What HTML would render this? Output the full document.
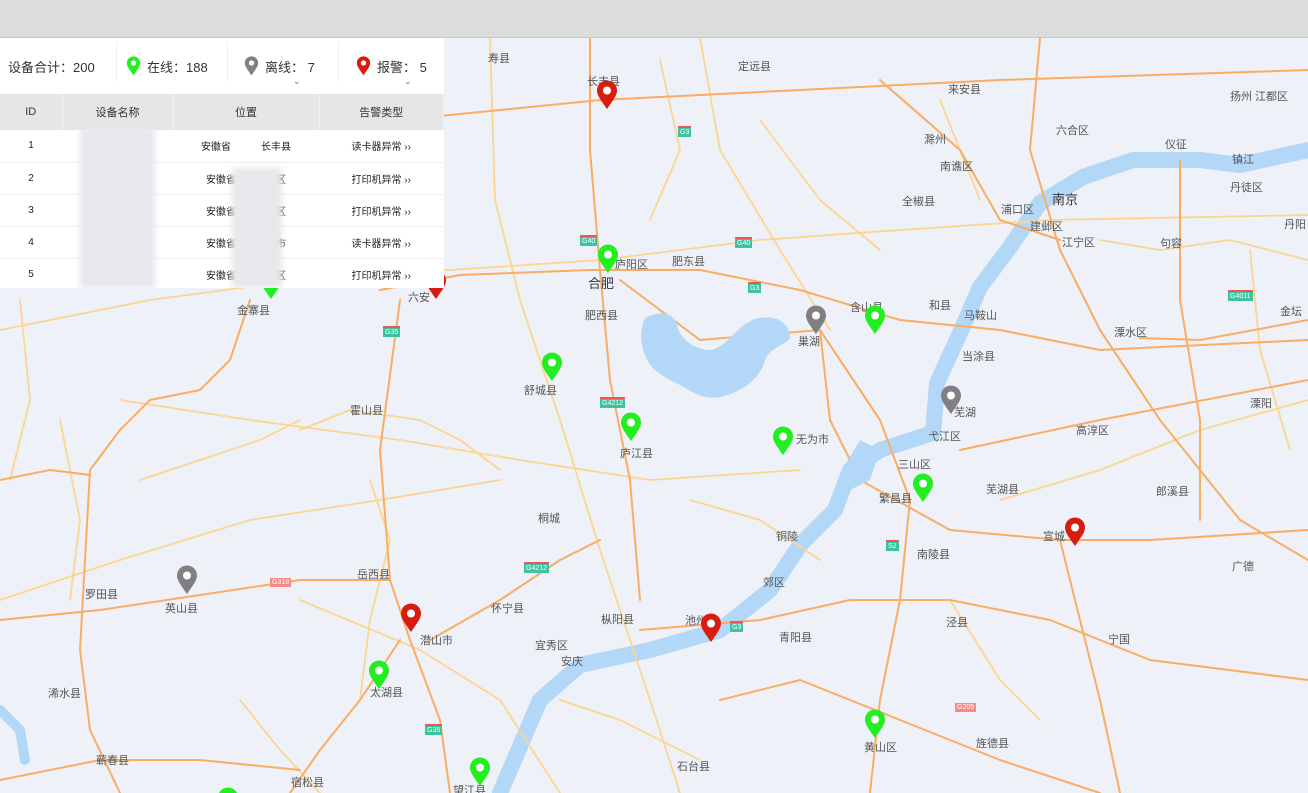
<!DOCTYPE html>
<html><head><meta charset="utf-8"><style>
*{margin:0;padding:0;box-sizing:border-box}
html,body{width:1308px;height:793px;overflow:hidden}
body{background:#eef1f8;font-family:"Liberation Sans","Noto Sans CJK SC",sans-serif;position:relative}
.top{position:absolute;left:0;top:0;width:1308px;height:38px;background:#dcdcdc;border-bottom:1px solid #c8c8c8}
.map{position:absolute;left:0;top:38px}
.lb{position:absolute;font-size:11px;color:#555;white-space:nowrap}
.pin{position:absolute;width:22px;height:30px}
.panel{position:absolute;left:0;top:38px;width:444px;height:250px;background:#fff;overflow:hidden}
.stats{height:56px;font-size:13px;color:#333;position:relative}
.stats div{display:flex;align-items:center;height:40px}
.sep{position:absolute;top:4px;width:1px;height:40px;background:#eee}
table{border-collapse:collapse;width:444px;font-size:10px;color:#222}
th{background:#e6e6e6;font-weight:normal;height:36px;font-size:11px;color:#333;border-right:1px solid #f3f3f3}
td{height:32px;border-bottom:1px solid #eee;text-align:center}
.blur{position:absolute;background:#e8e8ec;filter:blur(3px)}
.bd{position:absolute;font-size:7px;color:#fff;background:#3cc3a0;padding:0 2px;line-height:9px;border-top:2px solid #e55}
</style></head><body>
<div class="top"></div>
<svg class="map" width="1308" height="755" viewBox="0 38 1308 755">
<g fill="none" stroke-linecap="round" stroke-linejoin="round">
<path d="M1308,150 L1240,165 L1200,160 L1133,160 L1083,177 L1040,203 L1010,247 L980,287 L960,333 L937,383 L933,433 L880,450 L850,470 L835,510 L800,545 L770,590 L720,630 L650,650 L580,665 L540,700 L500,793" stroke="#b3d7f7" stroke-width="16"/>
<path d="M0,710 L20,730 L25,760" stroke="#b3d7f7" stroke-width="10"/>
<g stroke="#fcd590" stroke-width="1.8">
<path d="M0,330 L150,300 L300,280 L450,270 L600,260 L760,240 L900,230 L1050,220 L1308,215"/>
<path d="M490,38 L495,200 L520,300 L560,420 L600,550 L650,700 L680,793"/>
<path d="M120,400 L250,420 L400,440 L520,460 L650,480 L800,470"/>
<path d="M0,600 L120,560 L250,520 L380,500 L500,480"/>
<path d="M700,38 L720,150 L780,250 L830,330"/>
<path d="M300,600 L420,650 L500,700 L560,793"/>
<path d="M1000,500 L1100,470 L1200,430 L1308,400"/>
<path d="M20,300 L30,400 L10,480 M60,420 L80,520 L70,600 M140,480 L200,460 L260,440 L300,420"/>
<path d="M300,430 L350,410 L420,420 L460,440 L500,470"/>
<path d="M370,480 L390,540 L370,620 L360,700"/>
<path d="M660,60 L680,150 L650,220 M760,120 L820,200 L880,250 M940,100 L980,200"/>
<path d="M1100,240 L1160,250 L1230,240 L1308,260 M1250,250 L1260,350 L1290,450"/>
<path d="M690,500 L760,520 L820,560 M950,600 L1000,680 L1040,720"/>
<path d="M560,700 L620,720 L700,760 M240,700 L280,750 L320,793"/>
</g>
<g stroke="#f9ad63" stroke-width="2">
<path d="M0,160 L200,140 L400,120 L600,100 L800,90 L1000,80 L1308,70"/>
<path d="M380,290 L460,275 L590,270 L700,270 L800,290 L900,320 L1000,330 L1100,350 L1308,340"/>
<path d="M590,38 L590,150 L600,270 L610,380 L630,480 L640,600"/>
<path d="M400,300 L380,450 L390,580 L410,640 L440,720 L450,793"/>
<path d="M250,300 L230,360 L200,390 L150,400 L120,430 L90,470"/>
<path d="M90,470 L85,560 L80,650 L90,730 L120,793"/>
<path d="M0,480 L50,470 L90,475"/>
<path d="M0,620 L100,610 L200,595 L300,580 L390,580"/>
<path d="M620,280 L700,340 L820,330 L880,420 L910,500 L900,600 L880,700 L870,793"/>
<path d="M820,330 L830,420 L860,480 L950,530 L1060,540 L1150,540 L1308,530"/>
<path d="M640,630 L760,620 L850,600 L950,600 L1050,620 L1150,660 L1308,680"/>
<path d="M1060,540 L1080,620 L1100,700 L1120,793"/>
<path d="M1040,38 L1030,150 L1060,250 L1100,330 L1160,420 L1240,520 L1308,560"/>
<path d="M1180,160 L1180,300 L1200,420 L1200,520"/>
<path d="M1140,338 L1200,340 L1308,320"/>
<path d="M960,450 L1100,420 L1308,380"/>
<path d="M880,80 L960,150 L1000,220 L1060,240"/>
<path d="M720,700 L800,680 L900,720 L1000,760 L1100,793"/>
<path d="M0,780 L100,760 L200,760 L300,770"/>
<path d="M400,640 L360,700 L320,750 L290,793"/>
<path d="M430,640 L500,600 L560,560 L600,540"/>
</g>
<path d="M645,318 C660,310 672,313 676,322 C678,335 690,350 712,350 C730,345 740,320 760,318 C775,315 790,322 790,338 C785,345 770,348 765,360 C760,380 740,393 720,397 C700,400 690,390 680,385 C665,378 650,370 645,355 C640,343 640,328 645,318Z" fill="#b3d7f7"/>
<path d="M860,440 L880,450 L870,480 L850,490 L845,465Z" fill="#b3d7f7"/>
</g>
</svg>
<div class="bd" style="left:580px;top:235px">G40</div>
<div class="bd" style="left:735px;top:237px">G40</div>
<div class="bd" style="left:748px;top:282px">G3</div>
<div class="bd" style="left:678px;top:126px">G3</div>
<div class="bd" style="left:600px;top:397px">G4212</div>
<div class="bd" style="left:524px;top:562px">G4212</div>
<div class="bd" style="left:383px;top:326px">G35</div>
<div class="bd" style="left:425px;top:724px">G35</div>
<div class="bd" style="left:730px;top:621px">G3</div>
<div class="bd" style="left:270px;top:578px;background:#f58a86;border:0">G318</div>
<div class="bd" style="left:1228px;top:290px">G4011</div>
<div class="bd" style="left:886px;top:540px">S2</div>
<div class="bd" style="left:955px;top:703px;background:#f58a86;border:0">G205</div>
<div class="lb" style="left:488px;top:50px">寿县</div>
<div class="lb" style="left:587px;top:73px">长丰县</div>
<div class="lb" style="left:738px;top:58px">定远县</div>
<div class="lb" style="left:948px;top:81px">来安县</div>
<div class="lb" style="left:1230px;top:88px">扬州 江都区</div>
<div class="lb" style="left:1056px;top:122px">六合区</div>
<div class="lb" style="left:924px;top:131px">滁州</div>
<div class="lb" style="left:1165px;top:136px">仪征</div>
<div class="lb" style="left:940px;top:158px">南谯区</div>
<div class="lb" style="left:1232px;top:151px">镇江</div>
<div class="lb" style="left:1230px;top:179px">丹徒区</div>
<div class="lb" style="left:1052px;top:189px;font-size:13px;color:#333">南京</div>
<div class="lb" style="left:902px;top:193px">全椒县</div>
<div class="lb" style="left:1001px;top:201px">浦口区</div>
<div class="lb" style="left:1030px;top:218px">建邺区</div>
<div class="lb" style="left:1062px;top:234px">江宁区</div>
<div class="lb" style="left:1160px;top:235px">句容</div>
<div class="lb" style="left:1284px;top:216px">丹阳</div>
<div class="lb" style="left:615px;top:256px">庐阳区</div>
<div class="lb" style="left:672px;top:253px">肥东县</div>
<div class="lb" style="left:588px;top:273px;font-size:13px;color:#333">合肥</div>
<div class="lb" style="left:850px;top:299px">含山县</div>
<div class="lb" style="left:929px;top:297px">和县</div>
<div class="lb" style="left:964px;top:307px">马鞍山</div>
<div class="lb" style="left:1280px;top:303px">金坛</div>
<div class="lb" style="left:237px;top:302px">金寨县</div>
<div class="lb" style="left:408px;top:289px">六安</div>
<div class="lb" style="left:585px;top:307px">肥西县</div>
<div class="lb" style="left:798px;top:333px">巢湖</div>
<div class="lb" style="left:1114px;top:324px">溧水区</div>
<div class="lb" style="left:962px;top:348px">当涂县</div>
<div class="lb" style="left:524px;top:382px">舒城县</div>
<div class="lb" style="left:350px;top:402px">霍山县</div>
<div class="lb" style="left:954px;top:404px">芜湖</div>
<div class="lb" style="left:1250px;top:395px">溧阳</div>
<div class="lb" style="left:928px;top:428px">弋江区</div>
<div class="lb" style="left:1076px;top:422px">高淳区</div>
<div class="lb" style="left:796px;top:431px">无为市</div>
<div class="lb" style="left:620px;top:445px">庐江县</div>
<div class="lb" style="left:898px;top:456px">三山区</div>
<div class="lb" style="left:986px;top:481px">芜湖县</div>
<div class="lb" style="left:1156px;top:483px">郎溪县</div>
<div class="lb" style="left:879px;top:490px">繁昌县</div>
<div class="lb" style="left:538px;top:510px">桐城</div>
<div class="lb" style="left:776px;top:528px">铜陵</div>
<div class="lb" style="left:1043px;top:528px">宣城</div>
<div class="lb" style="left:917px;top:546px">南陵县</div>
<div class="lb" style="left:1232px;top:558px">广德</div>
<div class="lb" style="left:357px;top:566px">岳西县</div>
<div class="lb" style="left:763px;top:574px">郊区</div>
<div class="lb" style="left:85px;top:586px">罗田县</div>
<div class="lb" style="left:165px;top:600px">英山县</div>
<div class="lb" style="left:491px;top:600px">怀宁县</div>
<div class="lb" style="left:601px;top:611px">枞阳县</div>
<div class="lb" style="left:685px;top:612px">池州</div>
<div class="lb" style="left:946px;top:614px">泾县</div>
<div class="lb" style="left:420px;top:632px">潜山市</div>
<div class="lb" style="left:779px;top:629px">青阳县</div>
<div class="lb" style="left:1108px;top:631px">宁国</div>
<div class="lb" style="left:535px;top:637px">宜秀区</div>
<div class="lb" style="left:561px;top:653px">安庆</div>
<div class="lb" style="left:370px;top:684px">太湖县</div>
<div class="lb" style="left:48px;top:685px">浠水县</div>
<div class="lb" style="left:976px;top:735px">旌德县</div>
<div class="lb" style="left:864px;top:739px">黄山区</div>
<div class="lb" style="left:96px;top:752px">蕲春县</div>
<div class="lb" style="left:677px;top:758px">石台县</div>
<div class="lb" style="left:291px;top:774px">宿松县</div>
<div class="lb" style="left:453px;top:782px">望江县</div>
<svg width="0" height="0" style="position:absolute"><defs><g id="p"><path d="M11,29 C4,19 1,15 1,10.5 A10,10 0 0 1 21,10.5 C21,15 18,19 11,29Z"/><circle cx="11" cy="10.5" r="4" fill="#fff"/></g></defs></svg>
<svg class="pin" style="left:596px;top:80px;fill:#d71d10"><use href="#p"/></svg>
<svg class="pin" style="left:597px;top:244px;fill:#22ee22"><use href="#p"/></svg>
<svg class="pin" style="left:425px;top:270px;fill:#d71d10"><use href="#p"/></svg>
<svg class="pin" style="left:260px;top:270px;fill:#22ee22"><use href="#p"/></svg>
<svg class="pin" style="left:805px;top:305px;fill:#808080"><use href="#p"/></svg>
<svg class="pin" style="left:864px;top:305px;fill:#22ee22"><use href="#p"/></svg>
<svg class="pin" style="left:541px;top:352px;fill:#22ee22"><use href="#p"/></svg>
<svg class="pin" style="left:940px;top:385px;fill:#808080"><use href="#p"/></svg>
<svg class="pin" style="left:620px;top:412px;fill:#22ee22"><use href="#p"/></svg>
<svg class="pin" style="left:772px;top:426px;fill:#22ee22"><use href="#p"/></svg>
<svg class="pin" style="left:912px;top:473px;fill:#22ee22"><use href="#p"/></svg>
<svg class="pin" style="left:1064px;top:517px;fill:#d71d10"><use href="#p"/></svg>
<svg class="pin" style="left:176px;top:565px;fill:#808080"><use href="#p"/></svg>
<svg class="pin" style="left:400px;top:603px;fill:#d71d10"><use href="#p"/></svg>
<svg class="pin" style="left:700px;top:613px;fill:#d71d10"><use href="#p"/></svg>
<svg class="pin" style="left:368px;top:660px;fill:#22ee22"><use href="#p"/></svg>
<svg class="pin" style="left:864px;top:709px;fill:#22ee22"><use href="#p"/></svg>
<svg class="pin" style="left:469px;top:757px;fill:#22ee22"><use href="#p"/></svg>
<svg class="pin" style="left:217px;top:787px;fill:#22ee22"><use href="#p"/></svg>
<div class="panel">
<div class="stats">
<div style="position:absolute;left:8px;top:8px">设备合计：200</div>
<div style="position:absolute;left:126px;top:8px"><svg width="15" height="20" viewBox="0 0 22 30" style="fill:#22ee22;margin-right:6px"><use href="#p"/></svg>在线：188</div>
<div style="position:absolute;left:244px;top:8px"><svg width="15" height="20" viewBox="0 0 22 30" style="fill:#808080;margin-right:6px"><use href="#p"/></svg>离线：&nbsp;7</div>
<div style="position:absolute;left:356px;top:8px"><svg width="15" height="20" viewBox="0 0 22 30" style="fill:#d71d10;margin-right:6px"><use href="#p"/></svg>报警：&nbsp;5</div>
<span class="sep" style="left:116px"></span><span class="sep" style="left:227px"></span><span class="sep" style="left:338px"></span>
<span style="position:absolute;left:293px;top:38px;font-size:9px;color:#777">⌄</span>
<span style="position:absolute;left:404px;top:38px;font-size:9px;color:#777">⌄</span>
</div>
<table>
<tr><th style="width:62px">ID</th><th style="width:111px">设备名称</th><th style="width:146px">位置</th><th>告警类型</th></tr>
<tr><td>1</td><td></td><td>安徽省　　　长丰县</td><td>读卡器异常 ››</td></tr>
<tr><td>2</td><td></td><td>安徽省　　　　区</td><td>打印机异常 ››</td></tr>
<tr><td>3</td><td></td><td>安徽省　　　　区</td><td>打印机异常 ››</td></tr>
<tr><td>4</td><td></td><td>安徽省　　　　市</td><td>读卡器异常 ››</td></tr>
<tr><td>5</td><td></td><td>安徽省　　　　区</td><td>打印机异常 ››</td></tr>
</table>
<div class="blur" style="left:80px;top:90px;width:75px;height:160px"></div>
<div class="blur" style="left:232px;top:130px;width:50px;height:120px"></div>
</div>
</body></html>
